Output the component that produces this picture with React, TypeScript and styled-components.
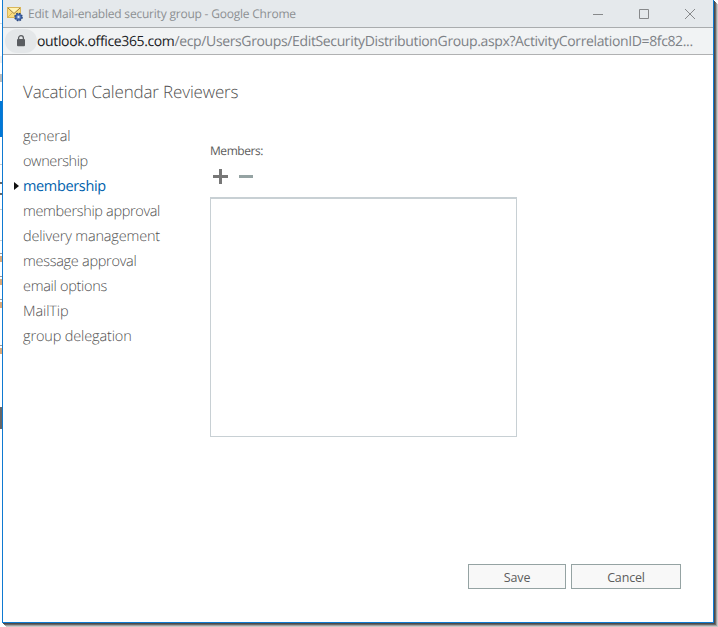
import React from "react";
import styled, { createGlobalStyle } from "styled-components";

const GlobalStyle = createGlobalStyle`
  *, *::before, *::after { box-sizing: border-box; }
  html, body { margin: 0; width: 718px; height: 627px; overflow: hidden; background: #fff; }
  body { font-family: "Open Sans", "Noto Sans", sans-serif; color: #666; text-rendering: geometricPrecision; }
  button { font: inherit; border: 0; padding: 0; background: none; }
`;

const Desktop = styled.div`
  width: 718px;
  height: 627px;
  display: flex;
  overflow: hidden;
`;

const Backdrop = styled.div`
  flex: 0 0 2px;
  display: flex;
  flex-direction: column;
  background: #fff;
`;

const BackdropPiece = styled.div<{ $h: number; $color?: string; $gap?: number }>`
  flex: 0 0 ${(p) => p.$h}px;
  margin-top: ${(p) => p.$gap ?? 0}px;
  background: ${(p) => p.$color ?? "#fff"};
`;

const Window = styled.div`
  width: 712px;
  height: 623px;
  display: flex;
  flex-direction: column;
  border: 1px solid #0f7ad2;
  border-top: 0;
  background: #fff;
  box-shadow: 1px 1px 0 #4b4b4b, 2px 2px 0 #686868, 3px 3px 0 #a0a0a0, 4px 4px 0 #c8c8c8;
`;

const TitleBar = styled.header`
  flex: 0 0 28px;
  display: flex;
  align-items: center;
  padding: 0 0 0 4px;
  background: #e5e9ec;
  border-bottom: 1px solid #a9acae;
`;

const WindowTitle = styled.span<{ $track: number }>`
  flex: 1;
  margin-left: 5px;
  font-size: 12px;
  line-height: 18px;
  letter-spacing: ${(p) => p.$track}px;
  color: #8c8f92;
  white-space: nowrap;
`;

const WindowControl = styled.button`
  width: 46px;
  height: 27px;
  display: flex;
  align-items: center;
  justify-content: center;
  color: #87898b;
`;

const AddressBar = styled.div`
  flex: 0 0 27px;
  display: flex;
  align-items: center;
  padding-left: 2px;
  background: #f1f3f4;
  border-bottom: 1px solid #b0b1b2;
`;

const SiteInfo = styled.button`
  flex: 0 0 32px;
  height: 24px;
  display: flex;
  align-items: center;
  justify-content: center;
  border-radius: 12px;
  background: #e4e7e9;
`;

const Address = styled.span<{ $track: number }>`
  padding-top: 2px;
  font-size: 14px;
  line-height: 20px;
  letter-spacing: ${(p) => p.$track}px;
  white-space: nowrap;
  color: #7d8186;
`;

const Host = styled.span`
  color: #202124;
`;

const Page = styled.main`
  flex: 1;
  display: flex;
  flex-direction: column;
  padding: 24px 32px 33px 20px;
`;

const Heading = styled.h1<{ $track: number }>`
  margin: 0;
  font-size: 17px;
  line-height: 26px;
  font-weight: 300;
  letter-spacing: ${(p) => p.$track}px;
  color: #505050;
`;

const Columns = styled.div`
  flex: 1;
  display: flex;
  padding-top: 18px;
`;

const Nav = styled.nav`
  flex: 0 0 187px;
  display: flex;
  flex-direction: column;
`;

const NavItem = styled.a<{ $active?: boolean; $track: number }>`
  position: relative;
  height: 25px;
  font-size: 14.5px;
  line-height: 27px;
  font-weight: ${(p) => (p.$active ? 400 : 300)};
  letter-spacing: ${(p) => p.$track}px;
  color: ${(p) => (p.$active ? "#0062ad" : "#505050")};
  white-space: nowrap;
`;

const Marker = styled.svg`
  position: absolute;
  left: -9px;
  top: 9px;
`;

const Panel = styled.section`
  width: 307px;
  padding-top: 19px;
`;

const Label = styled.div<{ $track: number }>`
  font-size: 12px;
  line-height: 18px;
  letter-spacing: ${(p) => p.$track}px;
  color: #5c5c5c;
`;

const Tools = styled.div`
  display: flex;
  gap: 11px;
  height: 37px;
  padding: 9px 0 0 3px;
`;

const MemberList = styled.div`
  height: 240px;
  border: 1px solid #c8d0d4;
  border-top-width: 2px;
`;

const Footer = styled.footer`
  display: flex;
  justify-content: flex-end;
  gap: 5px;
`;

const ActionButton = styled.button<{ $w: number; $track: number }>`
  && {
    width: ${(p) => p.$w}px;
    height: 25px;
    border: 1px solid #95a3a3;
    background: #f8f8f8;
    color: #5c5c5c;
    font-size: 12.5px;
    line-height: 23px;
    letter-spacing: ${(p) => p.$track}px;
    padding-top: 1px;
  }
`;

const MailIcon = () => (
  <svg width="16" height="16" viewBox="0 0 16 16">
    <rect x=".5" y="1.5" width="13" height="10" fill="#f9dc80" stroke="#d9b65a" />
    <path d="M1 2h12L7 7.5z" fill="#fff3b5" />
    <path d="M1 2l6 5.5L13 2" fill="none" stroke="#94712d" strokeWidth=".9" />
    <path d="M1 11l4-4M13 11L9 7" stroke="#d4ac4c" strokeWidth=".8" />
    <circle cx="11.5" cy="11" r="3.4" fill="#6486c5" stroke="#29477f" strokeWidth="1.8" strokeDasharray="1.6 1.07" />
    <circle cx="11.5" cy="11" r="2.7" fill="#6486c5" stroke="#355a9f" />
    <circle cx="11.5" cy="11" r="1.1" fill="#e3eefb" />
  </svg>
);

const LockIcon = () => (
  <svg width="10" height="12" viewBox="0 0 10 12">
    <path d="M2.6 5V3.1a2.4 2.4 0 0 1 4.8 0V5" fill="none" stroke="#5a5d61" strokeWidth="1.3" />
    <rect x="1" y="4" width="8" height="7.3" rx="1" fill="#5a5d61" />
  </svg>
);

const navItems = [
  { label: "general", track: -0.2 },
  { label: "ownership", track: -0.4 },
  { label: "membership", track: -0.35, active: true },
  { label: "membership approval", track: -0.34 },
  { label: "delivery management", track: -0.17 },
  { label: "message approval", track: -0.28 },
  { label: "email options", track: -0.3 },
  { label: "MailTip", track: -0.1 },
  { label: "group delegation", track: -0.14 },
];

const backdropPieces = [
  { gap: 23, h: 1, color: "#d9dde0" },
  { gap: 32, h: 7, color: "#eee" },
  { gap: 11, h: 8, color: "#bbb" },
  { gap: 19, h: 36, color: "#0078d7" },
  { gap: 27, h: 1, color: "#ccc" },
  { gap: 17, h: 2, color: "#666" },
  { gap: 9, h: 2, color: "#666" },
  { gap: 14, h: 1, color: "#ccc" },
  { gap: 30, h: 1, color: "#ccc" },
  { gap: 12, h: 1, color: "#999" },
  { gap: 2, h: 6, color: "#dba877" },
  { gap: 14, h: 1, color: "#999" },
  { gap: 2, h: 6, color: "#dba877" },
  { gap: 14, h: 1, color: "#999" },
  { gap: 2, h: 6, color: "#dba877" },
  { gap: 37, h: 1, color: "#999" },
  { gap: 2, h: 6, color: "#dba877" },
  { gap: 53, h: 22, color: "#666" },
];

export default function App() {
  return (
    <>
      <GlobalStyle />
      <Desktop>
        <Backdrop>
          {backdropPieces.map((p, i) => (
            <BackdropPiece key={i} $gap={p.gap} $h={p.h} $color={p.color} />
          ))}
        </Backdrop>
        <Window>
          <TitleBar>
            <MailIcon />
            <WindowTitle $track={-0.21}>Edit Mail-enabled security group - Google Chrome</WindowTitle>
            <WindowControl aria-label="Minimize">
              <svg width="10" height="10"><path d="M0 5.5h10" stroke="currentColor" /></svg>
            </WindowControl>
            <WindowControl aria-label="Maximize">
              <svg width="10" height="10"><path d="M.5.5h9v9h-9z" fill="none" stroke="currentColor" /></svg>
            </WindowControl>
            <WindowControl aria-label="Close">
              <svg width="10" height="10"><path d="M0 0l10 10M10 0L0 10" stroke="currentColor" /></svg>
            </WindowControl>
          </TitleBar>
          <AddressBar>
            <SiteInfo aria-label="Site information"><LockIcon /></SiteInfo>
            <Address $track={-0.365}>
              <Host>outlook.office365.com</Host>/ecp/UsersGroups/EditSecurityDistributionGroup.aspx?ActivityCorrelationID=8fc82...
            </Address>
          </AddressBar>
          <Page>
            <Heading $track={-0.15}>Vacation Calendar Reviewers</Heading>
            <Columns>
              <Nav>
                {navItems.map((item) => (
                  <NavItem key={item.label} $active={item.active} $track={item.track}>
                    {item.active && (
                      <Marker width="5" height="8" viewBox="0 0 5 8"><path d="M0 0l5 4-5 4z" fill="#111" /></Marker>
                    )}
                    {item.label}
                  </NavItem>
                ))}
              </Nav>
              <Panel>
                <Label $track={-0.45}>Members:</Label>
                <Tools>
                  <svg width="15" height="15"><path d="M6 0h3v6h6v3H9v6H6V9H0V6h6z" fill="#777" /></svg>
                  <svg width="14" height="15"><path d="M0 6h14v3H0z" fill="#95a3a3" /></svg>
                </Tools>
                <MemberList />
              </Panel>
            </Columns>
            <Footer>
              <ActionButton $w={98} $track={-0.1}>Save</ActionButton>
              <ActionButton $w={110} $track={-0.15}>Cancel</ActionButton>
            </Footer>
          </Page>
        </Window>
      </Desktop>
    </>
  );
}
